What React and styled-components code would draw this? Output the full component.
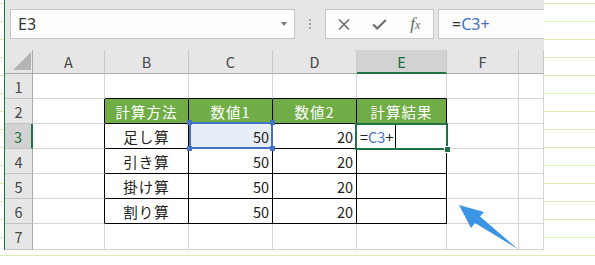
import styled, { createGlobalStyle } from "styled-components";

const GlobalStyle = createGlobalStyle`
  html, body { margin: 0; padding: 0; }
  body {
    width: 595px;
    height: 265px;
    overflow: hidden;
    background-color: #fff;
    background-image: repeating-linear-gradient(
      180deg,
      transparent 0px,
      transparent 3px,
      #d8edb8 3px,
      #d8edb8 4px,
      transparent 4px,
      transparent 18px
    );
    font-family: "Noto Sans CJK JP", "Noto Sans", sans-serif;
  }
`;

const Page = styled.div`
  position: relative;
  width: 595px;
  height: 265px;
  padding-left: 4px;
  box-sizing: border-box;
`;

const Window = styled.div`
  width: 540px;
  height: 250px;
  box-sizing: border-box;
  border-left: 1px solid #1f7145;
  background: #e6e6e6;
  overflow: hidden;
  display: flex;
  flex-direction: column;
`;

const FormulaBar = styled.div`
  height: 50px;
  flex-shrink: 0;
  display: flex;
  align-items: flex-start;
  padding: 9px 0 0 5px;
  box-sizing: border-box;
`;

const NameBox = styled.div`
  flex-shrink: 0;
  width: 285px;
  height: 30px;
  box-sizing: border-box;
  border: 1px solid #c6c6c6;
  background: #fdfdfd;
  display: flex;
  align-items: center;
  justify-content: space-between;
  padding: 0 7px;
  font-family: "Noto Sans", sans-serif;
  font-size: 16px;
  color: #333;
`;

const DropArrow = styled.span`
  width: 0;
  height: 0;
  border-left: 3.5px solid transparent;
  border-right: 3.5px solid transparent;
  border-top: 4px solid #7a7a7a;
`;

const Dots = styled.div`
  flex-shrink: 0;
  margin: 10px 0 0 14px;
  display: flex;
  flex-direction: column;
  gap: 2px;

  span {
    width: 2px;
    height: 2px;
    background: #a8a8a8;
  }
`;

const ButtonBox = styled.div`
  flex-shrink: 0;
  margin-left: 14px;
  width: 109px;
  height: 30px;
  box-sizing: border-box;
  border: 1px solid #c6c6c6;
  background: #fdfdfd;
  display: flex;
  align-items: center;
`;

const Btn = styled.span`
  width: 36px;
  display: flex;
  align-items: center;
  justify-content: center;
  color: #6f6f6f;
`;

const Fx = styled.span`
  font-family: "Liberation Serif", serif;
  font-style: italic;
  font-size: 17px;
  color: #666;

  small {
    font-size: 12px;
  }
`;

const FormulaInput = styled.div`
  flex-shrink: 0;
  margin-left: 4px;
  width: 200px;
  height: 30px;
  box-sizing: border-box;
  border: 1px solid #c6c6c6;
  background: #fdfdfd;
  display: flex;
  align-items: center;
  padding-left: 13px;
  font-family: "Noto Sans", sans-serif;
  font-size: 16px;
  color: #333;
`;

const Ref = styled.span`
  color: #3f6fc6;
`;

const Sheet = styled.div`
  display: grid;
  grid-template-columns: 28px 72px 84px 84px 84px 90px 72px 25px;
  grid-template-rows: 24px repeat(6, 25px) 26px;
`;

const Corner = styled.div`
  background: #e6e6e6;
  border-right: 1px solid #ababab;
  border-bottom: 1px solid #ababab;
  display: flex;
  align-items: flex-end;
  justify-content: flex-end;
  padding: 0 1px 3px 0;
`;

const Tri = styled.span`
  width: 18px;
  height: 18px;
  background: #b4b4b4;
  clip-path: polygon(100% 0, 100% 100%, 0 100%);
`;

const ColHead = styled.div`
  box-sizing: border-box;
  background: ${(p) => (p.$active ? "#d2d2d2" : "#e6e6e6")};
  border-right: 1px solid #c9c9c9;
  border-bottom: ${(p) => (p.$active ? "2px solid #217346" : "1px solid #ababab")};
  display: flex;
  align-items: center;
  justify-content: center;
  font-size: 14.5px;
  color: ${(p) => (p.$active ? "#1d6b40" : "#444")};
`;

const RowHead = styled.div`
  box-sizing: border-box;
  background: ${(p) => (p.$active ? "#d2d2d2" : "#e6e6e6")};
  border-right: ${(p) => (p.$active ? "2px solid #217346" : "1px solid #ababab")};
  border-bottom: 1px solid #c4c4c4;
  display: flex;
  align-items: center;
  justify-content: center;
  font-size: 14.5px;
  color: ${(p) => (p.$active ? "#1d6b40" : "#444")};
`;

const Cell = styled.div`
  position: relative;
  box-sizing: border-box;
  display: flex;
  align-items: center;
  justify-content: ${(p) => p.$align || "flex-start"};
  padding: 0 3px;
  background: ${(p) => p.$fill || "#fff"};
  border-right: 1px solid ${(p) => (p.$br ? "#000" : "#d4d4d4")};
  border-bottom: 1px solid ${(p) => (p.$bb ? "#000" : "#d4d4d4")};
  color: ${(p) => p.$color || "#222"};
  font-size: 14.5px;
  letter-spacing: ${(p) => (p.$wide ? "1px" : "0")};
  white-space: nowrap;
`;

const RefBox = styled.span`
  position: absolute;
  top: -2px;
  left: 0;
  right: -1px;
  bottom: -1px;
  border: 2px solid #4472c4;
  z-index: 2;
  pointer-events: none;
`;

const Handle = styled.span`
  position: absolute;
  width: 5px;
  height: 5px;
  background: #4472c4;
  ${(p) => (p.$top ? "top: -4px;" : "bottom: -4px;")}
  ${(p) => (p.$left ? "left: -4px;" : "right: -4px;")}
`;

const ActiveBox = styled.span`
  position: absolute;
  top: -1px;
  left: -2px;
  right: -2px;
  bottom: -2px;
  border: 2px solid #217346;
  z-index: 3;
  pointer-events: none;
`;

const FillHandle = styled.span`
  position: absolute;
  right: -4px;
  bottom: -4px;
  width: 5px;
  height: 5px;
  background: #217346;
  outline: 1px solid #fff;
`;

const Caret = styled.span`
  align-self: stretch;
  width: 1px;
  margin-left: 2px;
  background: #000;
`;

const Arrow = styled.svg`
  position: absolute;
  top: 0;
  left: 0;
  pointer-events: none;
`;

const COLS = ["A", "B", "C", "D", "E", "F", ""];

const TABLE = {
  2: ["計算方法", "数値1", "数値2", "計算結果"],
  3: ["足し算", "50", "20", ""],
  4: ["引き算", "50", "20", ""],
  5: ["掛け算", "50", "20", ""],
  6: ["割り算", "50", "20", ""],
};

function renderRow(r) {
  const cells = [];
  cells.push(
    <RowHead key={`h${r}`} $active={r === 3}>
      {r}
    </RowHead>
  );
  const inTable = r >= 2 && r <= 6;
  // column A
  cells.push(<Cell key={`a${r}`} $br={inTable} />);
  for (let c = 0; c < 4; c++) {
    const key = `${r}-${c}`;
    if (r === 1) {
      cells.push(<Cell key={key} $bb />);
      continue;
    }
    if (!inTable) {
      cells.push(<Cell key={key} />);
      continue;
    }
    const text = TABLE[r][c];
    if (r === 2) {
      cells.push(
        <Cell key={key} $bb $br $fill="#70ad47" $color="#fff" $align="center" $wide>
          {text}
        </Cell>
      );
    } else if (c === 0) {
      cells.push(
        <Cell key={key} $bb $br $align="center" $wide>
          {text}
        </Cell>
      );
    } else if (c === 3 && r === 3) {
      cells.push(
        <Cell key={key} $bb $br>
          <span>=</span>
          <Ref>C3</Ref>
          <span>+</span>
          <Caret />
          <ActiveBox>
            <FillHandle />
          </ActiveBox>
        </Cell>
      );
    } else if (c === 1 && r === 3) {
      cells.push(
        <Cell key={key} $bb $br $align="flex-end" $fill="#e8eef9">
          {text}
          <RefBox>
            <Handle $top $left />
            <Handle $top />
            <Handle $left />
            <Handle />
          </RefBox>
        </Cell>
      );
    } else {
      cells.push(
        <Cell key={key} $bb $br $align="flex-end">
          {text}
        </Cell>
      );
    }
  }
  cells.push(<Cell key={`f${r}`} />);
  cells.push(<Cell key={`g${r}`} />);
  return cells;
}

export default function App() {
  return (
    <>
      <GlobalStyle />
      <Page>
        <Window>
          <FormulaBar>
            <NameBox>
              <span>E3</span>
              <DropArrow />
            </NameBox>
            <Dots>
              <span />
              <span />
              <span />
            </Dots>
            <ButtonBox>
              <Btn>
                <svg width="12" height="11" viewBox="0 0 12 11">
                  <path d="M1 0.5 L11 10.5 M11 0.5 L1 10.5" stroke="#6f6f6f" strokeWidth="1.6" fill="none" />
                </svg>
              </Btn>
              <Btn>
                <svg width="15" height="11" viewBox="0 0 15 11">
                  <path d="M1.2 5.5 L5.2 9.5 L13.8 1" stroke="#6f6f6f" strokeWidth="2.2" fill="none" />
                </svg>
              </Btn>
              <Btn>
                <Fx>
                  f<small>x</small>
                </Fx>
              </Btn>
            </ButtonBox>
            <FormulaInput>
              <span>=</span>
              <Ref>C3+</Ref>
            </FormulaInput>
          </FormulaBar>
          <Sheet>
            <Corner>
              <Tri />
            </Corner>
            {COLS.map((c, i) => (
              <ColHead key={i} $active={c === "E"}>
                {c}
              </ColHead>
            ))}
            {[1, 2, 3, 4, 5, 6, 7].map((r) => renderRow(r))}
          </Sheet>
        </Window>
        <Arrow width="595" height="265" viewBox="0 0 595 265">
          <polygon
            points="459,205 484,212 480,216.5 518.5,249.5 475,223 471,228"
            fill="#3b95e4"
          />
        </Arrow>
      </Page>
    </>
  );
}
